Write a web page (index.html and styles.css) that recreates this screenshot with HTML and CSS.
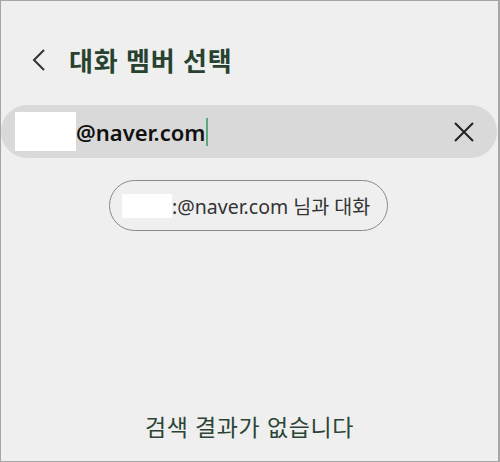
FILE: index.html
```html
<!DOCTYPE html>
<html lang="ko">
<head>
<meta charset="UTF-8">
<title>대화 멤버 선택</title>
<link rel="stylesheet" href="styles.css">
</head>
<body>
<div class="screen">
  <!-- 상단 제목 -->
  <div class="header">
    <svg class="back" width="14" height="22" viewBox="0 0 14 22"><path d="M12 1 L2 11 L12 21" fill="none" stroke="#333" stroke-width="2"/></svg>
    <h1 class="title">대화 멤버 선택</h1>
  </div>

  <!-- 검색창 -->
  <div class="search">
    <span class="mask"></span>
    <span class="query">@naver.com</span><span class="cursor"></span>
    <svg class="clear" width="22" height="22" viewBox="0 0 22 22"><path d="M2 2 L20 20 M20 2 L2 20" fill="none" stroke="#222" stroke-width="2"/></svg>
  </div>

  <!-- 제안 -->
  <div class="suggest-row">
    <div class="chip"><span class="mask small"></span>:@naver.com 님과 대화</div>
  </div>

  <div class="empty">검색 결과가 없습니다</div>
</div>
</body>
</html>
```

FILE: styles.css
```css
body {
    margin: 0;
    font-family: "Noto Sans", "Noto Sans CJK KR", sans-serif;
}
.screen {
    width: 500px;
    height: 462px;
    box-sizing: border-box;
    border: 1px solid #a6a6a6;
    border-right-width: 2px;
    background-color: #efefef;
    display: flex;
    flex-direction: column;
}
.header {
    display: flex;
    align-items: center;
    height: 30px;
    margin-top: 44px;
    padding-left: 31px;
}
.back {
    margin-right: 23px;
}
.title {
    margin: 0;
    font-size: 26px;
    font-weight: bold;
    color: #27432f;
    letter-spacing: 0.8px;
}
.search {
    display: flex;
    align-items: center;
    height: 53px;
    margin-top: 30px;
    margin-right: 1px;
    border-radius: 27px;
    background-color: #d9d9d9;
    padding-left: 14px;
    padding-right: 22px;
}
.mask {
    display: inline-block;
    width: 61px;
    height: 39px;
    background-color: #fff;
}
.mask.small {
    width: 50px;
    height: 24px;
}
.query {
    font-size: 22px;
    font-weight: 600;
    color: #111;
}
.cursor {
    display: inline-block;
    width: 2px;
    height: 28px;
    margin-left: 1px;
    background-color: #5fa77a;
}
.clear {
    margin-left: auto;
}
.suggest-row {
    display: flex;
    padding-left: 108px;
    margin-top: 22px;
}
.chip {
    display: flex;
    align-items: center;
    height: 49px;
    padding: 0 17px 0 12px;
    border: 1px solid #8a8a8a;
    border-radius: 26px;
    font-size: 19.5px;
    color: #333;
}
.empty {
    margin-top: auto;
    margin-bottom: 18px;
    text-align: center;
    font-size: 23px;
    color: #2c4434;
    letter-spacing: 0.6px;
}
```
